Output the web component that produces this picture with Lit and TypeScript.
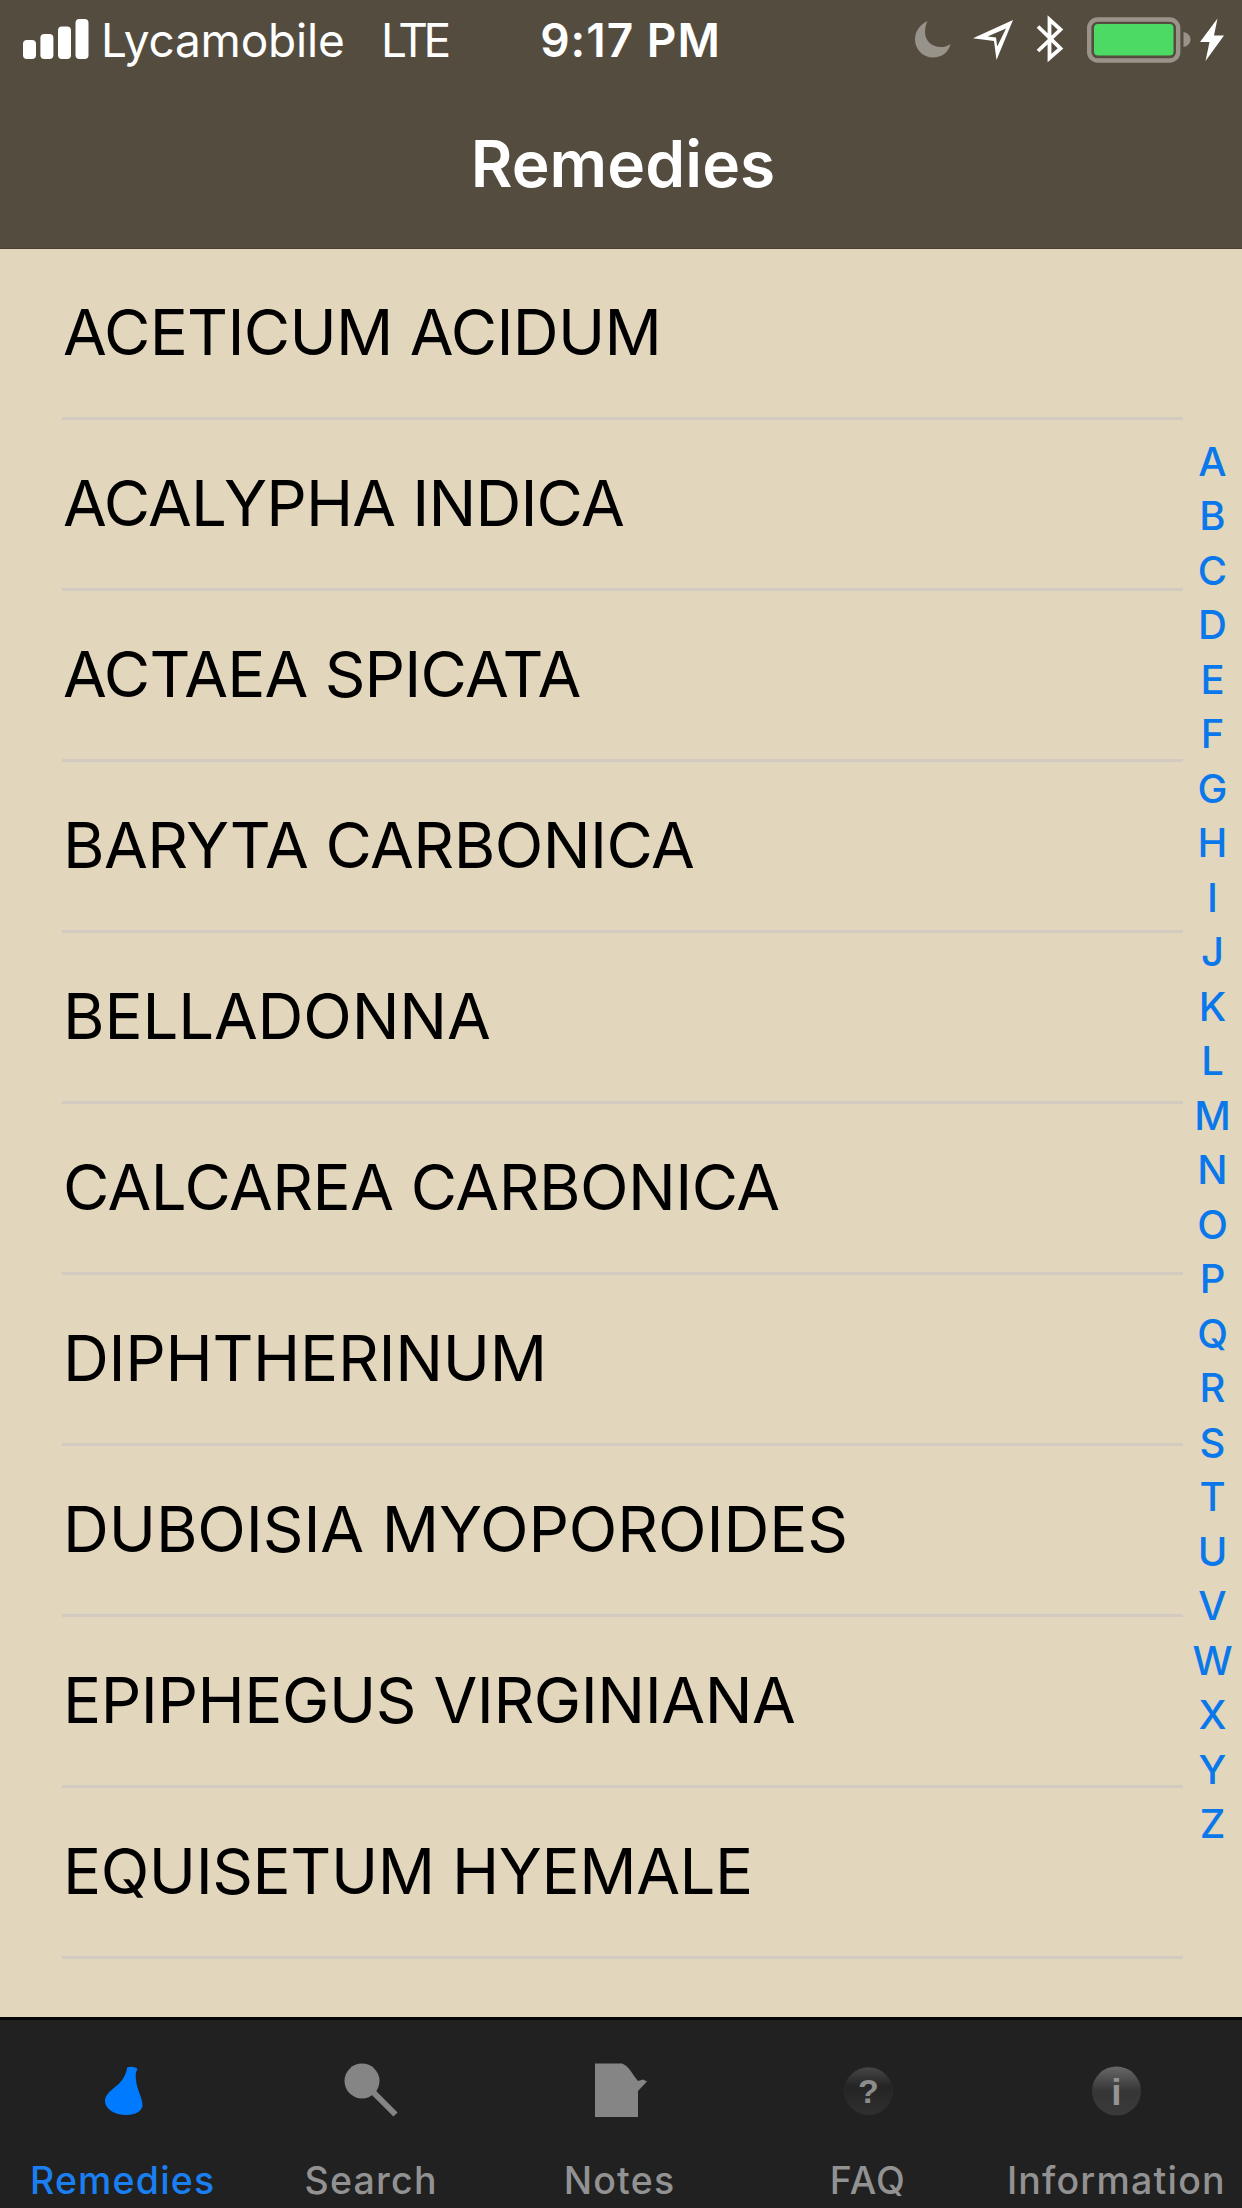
import { LitElement, html, css, svg } from "lit";
import { customElement, property } from "lit/decorators.js";
import { classMap } from "lit/directives/class-map.js";
import { styleMap } from "lit/directives/style-map.js";

const REMEDIES: { name: string; tracking: number }[] = [
  { name: "ACETICUM ACIDUM", tracking: -0.7 },
  { name: "ACALYPHA INDICA", tracking: -0.85 },
  { name: "ACTAEA SPICATA", tracking: -0.8 },
  { name: "BARYTA CARBONICA", tracking: -0.55 },
  { name: "BELLADONNA", tracking: -0.15 },
  { name: "CALCAREA CARBONICA", tracking: -0.55 },
  { name: "DIPHTHERINUM", tracking: -0.3 },
  { name: "DUBOISIA MYOPOROIDES", tracking: -0.1 },
  { name: "EPIPHEGUS VIRGINIANA", tracking: -0.45 },
  { name: "EQUISETUM HYEMALE", tracking: -0.43 },
];

const LETTERS = "ABCDEFGHIJKLMNOPQRSTUVWXYZ".split("");

@customElement("status-bar")
class StatusBar extends LitElement {
  static styles = css`
    :host {
      display: grid;
      grid-template-columns: 1fr auto 1fr;
      align-items: center;
      height: 80px;
      padding: 0 18px 0 23px;
      box-sizing: border-box;
      color: #fff;
      font-size: 46px;
      line-height: 80px;
    }
    .left, .right { display: flex; align-items: center; height: 80px; white-space: pre; }
    .left { font-weight: 400; }
    .right { justify-content: flex-end; }
    .carrier { width: 240px; margin-left: 12px; letter-spacing: -0.2px; }
    .network { margin-left: 40px; letter-spacing: -4.4px; }
    .time { font-weight: 600; letter-spacing: 1px; margin-left: 14px; }
    svg { display: block; flex: none; }
    .moon { margin-right: 22px; }
    .arrow { margin-right: 23px; }
    .bluetooth { margin-right: 23px; }
    .battery { margin-right: 9px; }
  `;
  render() {
    return html`
      <div class="left">
        <svg width="66" height="80" viewBox="0 0 66 80" fill="#fff">
          <rect x="0" y="40" width="13" height="19" rx="4" />
          <rect x="17.4" y="34" width="13" height="25" rx="4" />
          <rect x="35" y="26.5" width="13" height="32.5" rx="4" />
          <rect x="52.5" y="19" width="13" height="40" rx="4" />
        </svg>
        <span class="carrier">Lycamobile</span>
        <span class="network">LTE</span>
      </div>
      <div class="time">9:17 PM</div>
      <div class="right">
        <svg class="moon" width="36" height="80" viewBox="0 0 36 80">
          <path d="M12.5 21C4 25 0 32 0 39.5C0 49.500 8 57.500 18 57.500C26.500 57.500 33.500 52.500 35.500 44C32 46.500 29 47 26 47C16.500 47 10 40.500 10 32C10 28 10.800 24.500 12.500 21Z" fill="#97928a" />
        </svg>
        <svg class="arrow" width="40" height="80" viewBox="0 0 40 80">
          <path fill-rule="evenodd" d="M40 20L0 38.200L21 41L23.500 60ZM33 28.500L24.200 46.500L23 37.500L14.500 36.500Z" fill="#fff" />
        </svg>
        <svg class="bluetooth" width="28" height="80" viewBox="0 0 28 80">
          <path d="M2 26.500L24.500 48.500L13.500 58V19.500L24.500 29.500L2 51" fill="none" stroke="#fff" stroke-width="3.800" stroke-miterlimit="8" />
        </svg>
        <svg class="battery" width="104" height="80" viewBox="0 0 104 80">
          <rect x="2.200" y="19.500" width="89" height="41" rx="8.500" fill="none" stroke="#99938a" stroke-width="4.400" />
          <rect x="7" y="24" width="79.500" height="31.500" rx="4" fill="#4cd964" />
          <path d="M96.500 32C101 33 103.500 36 103.500 39.500C103.500 43 101 46 96.500 47Z" fill="#99938a" />
        </svg>
        <svg width="24" height="80" viewBox="0 0 24 80">
          <path d="M17.500 18.500L0 42H9.500L5.500 61L24 35.500H14Z" fill="#fff" />
        </svg>
      </div>
    `;
  }
}

@customElement("remedy-row")
class RemedyRow extends LitElement {
  @property() name = "";
  @property({ type: Number }) tracking = 0;
  static styles = css`
    :host { display: flex; height: 171px; padding-left: 62px; }
    .cell {
      display: flex;
      align-items: center;
      width: 1121px;
      box-sizing: border-box;
      padding: 0 0 3px 1px;
      border-bottom: 3px solid #d3cac1;
      color: #000;
      font-size: 63.500px;
      font-weight: 400;
      white-space: nowrap;
    }
  `;
  render() {
    return html`<div class="cell" style=${styleMap({ letterSpacing: `${this.tracking}px` })}>${this.name}</div>`;
  }
}

@customElement("tab-item")
class TabItem extends LitElement {
  @property() label = "";
  @property() icon = "";
  @property({ type: Boolean }) active = false;
  static styles = css`
    :host { display: block; flex: 1 1 0; min-width: 0; }
    .tab { display: flex; flex-direction: column; align-items: center; padding-right: 3px; color: #929292; }
    .active { color: #1a7ff0; }
    svg { display: block; margin-top: 30px; }
    .label { margin-top: 39px; font-size: 37.500px; line-height: 50px; font-weight: 500; letter-spacing: 1.2px; white-space: nowrap; }
    .glyph { font-family: "Liberation Sans", Arial, sans-serif; font-weight: 700; }
  `;
  private art() {
    switch (this.icon) {
      case "flask":
        return svg`<path transform="translate(9.500 0)" d="M24.500 17.500C28 16 33 16.500 35 19C33 22 33 26 33.500 30C34.500 40 40 48 40 55C40 61 33 65 24 65C12 65 2.500 59 2.500 51C2.500 41 17 37 22 26C23.500 22.500 24.500 20 24.500 17.500Z" fill="#007aff" />`;
      case "search":
        return svg`<circle cx="21" cy="31" r="17.500" fill="#858585" /><path d="M32 42L54.500 64.500" stroke="#858585" stroke-width="6" />`;
      case "notes":
        return svg`<path d="M5 13.500H32C39 16 42 24 48 31L53 29.500L57 31.500L48 41V67H5Z" fill="#858585" />`;
      case "faq":
        return svg`
          <defs><linearGradient id="g" x1="0" y1="0" x2="0" y2="1"><stop offset="0" stop-color="#484848" /><stop offset="0.400" stop-color="#242424" /><stop offset="1" stop-color="#303030" /></linearGradient></defs>
          <circle cx="30.500" cy="41" r="24" fill="url(#g)" stroke="#2b2b2b" />
          <text class="glyph" x="30.500" y="52.500" text-anchor="middle" font-size="34" fill="#8c8c8c">?</text>`;
      default:
        return svg`
          <defs><linearGradient id="g" x1="0" y1="0" x2="0" y2="1"><stop offset="0" stop-color="#686868" /><stop offset="0.500" stop-color="#363636" /><stop offset="1" stop-color="#3a3a3a" /></linearGradient></defs>
          <circle cx="30.500" cy="41" r="24.500" fill="url(#g)" />
          <text class="glyph" x="30.500" y="54.500" text-anchor="middle" font-size="37" fill="#949494">i</text>`;
    }
  }
  render() {
    return html`
      <div class=${classMap({ tab: true, active: this.active })}>
        <svg width="60" height="67" viewBox="0 0 60 67">${this.art()}</svg>
        <span class="label">${this.label}</span>
      </div>
    `;
  }
}

@customElement("app-root")
class AppRoot extends LitElement {
  static styles = css`
    :host {
      display: flex;
      flex-direction: column;
      width: 1242px;
      height: 2208px;
      overflow: hidden;
      background: #e2d6bc;
      font-family: Inter, "Liberation Sans", sans-serif;
    }
    .header { height: 249px; flex: none; box-sizing: border-box; background: #544d3f; border-bottom: 1px solid #4a3f33; }
    .title {
      margin: 0;
      padding: 4px 0 0 4px;
      color: #fff;
      text-align: center;
      font-size: 64px;
      font-weight: 600;
      line-height: 160px;
      letter-spacing: 0.1px;
    }
    .body { position: relative; flex: 1; min-height: 0; overflow: hidden; }
    .index {
      position: absolute;
      top: 185.5px;
      right: 0;
      width: 59px;
      display: flex;
      flex-direction: column;
      text-align: center;
      color: #0a78ea;
      font-size: 40px;
      font-weight: 550;
      line-height: 54.5px;
    }
    .tabs { display: flex; flex: none; height: 191px; box-sizing: border-box; background: #212121; border-top: 3px solid #050505; }
  `;
  render() {
    return html`
      <header class="header">
        <status-bar></status-bar>
        <h1 class="title">Remedies</h1>
      </header>
      <main class="body">
        ${REMEDIES.map((r) => html`<remedy-row .name=${r.name} .tracking=${r.tracking}></remedy-row>`)}
        <nav class="index">${LETTERS.map((l) => html`<span>${l}</span>`)}</nav>
      </main>
      <nav class="tabs">
        <tab-item label="Remedies" icon="flask" active></tab-item>
        <tab-item label="Search" icon="search"></tab-item>
        <tab-item label="Notes" icon="notes"></tab-item>
        <tab-item label="FAQ" icon="faq"></tab-item>
        <tab-item label="Information" icon="info"></tab-item>
      </nav>
    `;
  }
}
